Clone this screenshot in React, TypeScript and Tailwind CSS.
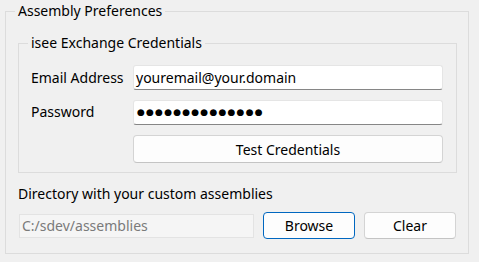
import React from 'react';

const font = { fontFamily: '"Noto Sans", "Open Sans", sans-serif' };

function TextBox({ children }: { children: React.ReactNode }) {
  return (
    <div className="flex h-[25px] w-[310px] items-center rounded-[3px] border border-[#e5e5e5] border-b-[#868686] bg-white pl-[2px] text-[14px] text-black">
      {children}
    </div>
  );
}

function Button({ label, focused, className }: { label: string; focused?: boolean; className?: string }) {
  return (
    <button
      className={
        'flex h-[27px] items-center justify-center rounded-[4px] border bg-[#fdfdfd] text-[14px] text-black ' +
        (focused ? 'border-[#0067c0] ' : 'border-[#d4d4d4] border-b-[#c4c4c4] ') +
        (className ?? '')
      }
    >
      {label}
    </button>
  );
}

export default function App() {
  return (
    <div className="h-[262px] w-[479px] bg-[#f0f0f0] pl-[5px] text-[14px] text-black" style={font}>
      {/* Outer group box */}
      <fieldset className="w-[464px] border border-[#dcdcdc] pb-[14px] pl-[12px] pr-[11px]">
        <legend className="-ml-[3px] px-[3px] leading-[22px]">Assembly Preferences</legend>

        {/* Credentials group */}
        <fieldset className="mt-[10px] border border-[#dcdcdc] pb-[9px] pl-[12px] pr-[13px]">
          <legend className="-ml-[3px] px-[3px] leading-[22px]">isee Exchange Credentials</legend>
          <div className="mt-[11px] flex flex-col gap-[10px]">
            <div className="flex items-center">
              <span className="w-[102px]">Email Address</span>
              <TextBox>youremail@your.domain</TextBox>
            </div>
            <div className="flex items-center">
              <span className="w-[102px] -translate-y-[1px]">Password</span>
              <TextBox>
                <span className="pl-[1px] text-[9px] tracking-[1.2px]" style={{ fontFamily: '"DejaVu Sans", sans-serif' }}>
                  ●●●●●●●●●●●●●●
                </span>
              </TextBox>
            </div>
            <div className="flex">
              <div className="w-[102px]" />
              <Button label="Test Credentials" className="h-[28px] w-[310px]" />
            </div>
          </div>
        </fieldset>

        {/* Directory */}
        <div className="mt-[10px] leading-[22px]">Directory with your custom assemblies</div>
        <div className="mt-[7px] flex items-center">
          <div className="ml-[1px] flex h-[24px] w-[235px] items-center border border-[#e3e3e3] bg-[#f5f5f5] pl-[2px] text-[#7a7a7a]">
            C:/sdev/assemblies
          </div>
          <Button label="Browse" focused className="ml-[9px] w-[92px]" />
          <Button label="Clear" className="ml-[9px] w-[92px]" />
        </div>
      </fieldset>
    </div>
  );
}
